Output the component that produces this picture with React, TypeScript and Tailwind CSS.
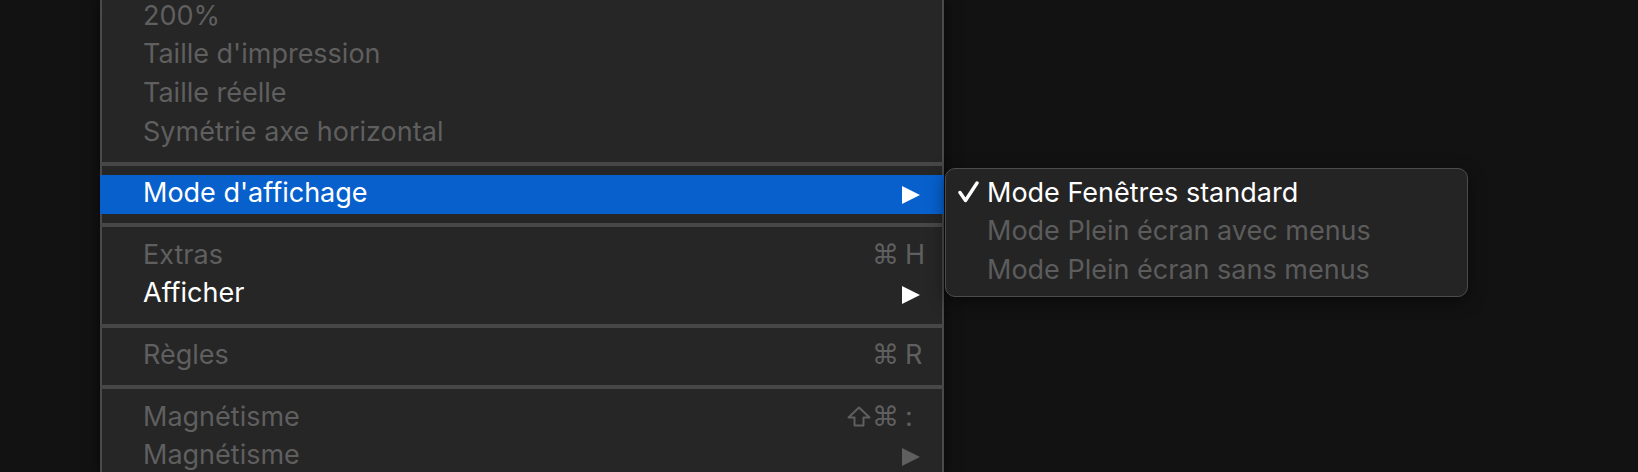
import React from "react";

const FONT = { fontFamily: "Inter, 'Noto Sans', 'DejaVu Sans', sans-serif" };
const SYM = { fontFamily: "'DejaVu Sans', sans-serif" };

function Arrow({ color }: { color: string }) {
  return (
    <svg width="18" height="18" viewBox="0 0 18 18" className="block">
      <polygon points="0,0 18,9 0,18" fill={color} />
    </svg>
  );
}

function ShiftIcon() {
  return (
    <svg width="24" height="21" viewBox="0 0 24 21" className="mr-[1px] block">
      <polygon
        points="12,1.5 22.5,11.5 16.5,11.5 16.5,19.5 7.5,19.5 7.5,11.5 1.5,11.5"
        fill="none"
        stroke="#5f5f5f"
        strokeWidth="2"
        strokeLinejoin="round"
      />
    </svg>
  );
}

type Item = {
  label: string;
  enabled?: boolean;
  selected?: boolean;
  shift?: boolean;
  mods?: string;
  keyChar?: string;
  arrow?: boolean;
};

function Row({ item }: { item: Item }) {
  const textColor = item.selected || item.enabled ? "text-white" : "text-[#5f5f5f]";
  const arrowColor = item.selected || item.enabled ? "#ffffff" : "#5f5f5f";
  return (
    <div
      className={`flex h-[38.6px] items-center justify-between pl-[43px] pr-[20px] text-[27px] leading-none ${textColor} ${
        item.selected ? "bg-[#0760cc]" : ""
      }`}
    >
      <span className="-mt-[4px]">{item.label}</span>
      <div className="flex items-center">
        {item.shift && <div className="-mt-[4px]"><ShiftIcon /></div>}
        {item.mods && (
          <span className="mr-[3px] -mt-[3px] text-[27px] text-[#5f5f5f]" style={SYM}>
            {item.mods}
          </span>
        )}
        <div className="flex w-[22px] items-center">
          {item.keyChar && <span className="pl-[3px] text-[#5f5f5f] -mt-[4px]">{item.keyChar}</span>}
          {item.arrow && <Arrow color={arrowColor} />}
        </div>
      </div>
    </div>
  );
}

function Sep() {
  return (
    <div className="py-[9.5px]">
      <div className="h-[4px] bg-[#474747]" />
    </div>
  );
}

export default function App() {
  return (
    <div className="flex h-[472px] w-[1638px] overflow-hidden bg-[#121212]" style={FONT}>
      <div className="w-[100px] shrink-0" />
      <div className="-mt-[2px] flex h-[480px] w-[844px] shrink-0 flex-col self-start bg-[#262626] shadow-[inset_2px_0_0_#4a4a4a,inset_-2px_0_0_#4a4a4a,0_0_14px_rgba(0,0,0,0.6)]">
        <Row item={{ label: "200%" }} />
        <Row item={{ label: "Taille d'impression" }} />
        <Row item={{ label: "Taille réelle" }} />
        <Row item={{ label: "Symétrie axe horizontal" }} />
        <Sep />
        <Row item={{ label: "Mode d'affichage", selected: true, arrow: true }} />
        <Sep />
        <Row item={{ label: "Extras", mods: "⌘", keyChar: "H" }} />
        <Row item={{ label: "Afficher", enabled: true, arrow: true }} />
        <Sep />
        <Row item={{ label: "Règles", mods: "⌘", keyChar: "R" }} />
        <Sep />
        <Row item={{ label: "Magnétisme", shift: true, mods: "⌘", keyChar: ":" }} />
        <Row item={{ label: "Magnétisme", arrow: true }} />
      </div>
      <div className="ml-[1px] mt-[168px] h-[129px] w-[523px] shrink-0 self-start rounded-[10px] border-[1.5px] border-[#4c4c4c] bg-[#242424] pt-[6px] shadow-[0_4px_16px_rgba(0,0,0,0.5)]">
        <div className="flex h-[38.6px] items-center text-[27px] leading-none text-white">
          <div className="flex w-[41px] justify-end pr-[8px]">
            <svg width="21" height="22" viewBox="0 0 21 22" className="block -mt-[4px]">
              <path d="M2 11.5 L7.5 19.5 L19 2" fill="none" stroke="#ffffff" strokeWidth="3.4" strokeLinecap="round" strokeLinejoin="round" />
            </svg>
          </div>
          <span className="-mt-[4px]">Mode Fenêtres standard</span>
        </div>
        <div className="flex h-[38.6px] items-center pl-[41px] text-[27px] leading-none text-[#5c5c5c]">
          <span className="-mt-[4px]">Mode Plein écran avec menus</span>
        </div>
        <div className="flex h-[38.6px] items-center pl-[41px] text-[27px] leading-none text-[#5c5c5c]">
          <span className="-mt-[4px]">Mode Plein écran sans menus</span>
        </div>
      </div>
    </div>
  );
}
